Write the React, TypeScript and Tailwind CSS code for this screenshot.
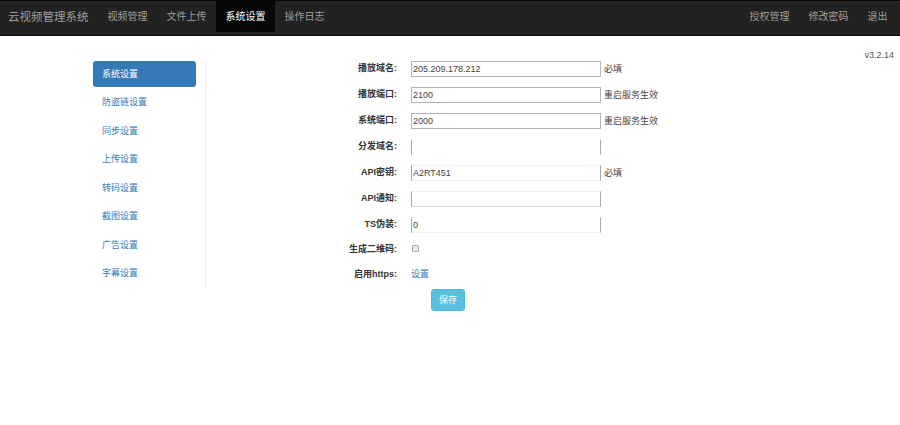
import React from "react";

const font = { fontFamily: '"Liberation Sans", "Noto Sans CJK SC", sans-serif' };

const sideItems = ["系统设置", "防盗链设置", "同步设置", "上传设置", "转码设置", "截图设置", "广告设置", "字幕设置"];

type Row = { label: string; value?: string; hint?: string; border: string };
const rows: Row[] = [
  { label: "播放域名:", value: "205.209.178.212", hint: "必填", border: "border-[#b5b5b5]" },
  { label: "播放端口:", value: "2100", hint: "重启服务生效", border: "border-[#b5b5b5]" },
  { label: "系统端口:", value: "2000", hint: "重启服务生效", border: "border-[#b5b5b5]" },
  { label: "分发域名:", border: "border-x-[#a8a8a8] border-y-white" },
  { label: "API密钥:", value: "A2RT451", hint: "必填", border: "border-x-[#a8a8a8] border-y-[#eeeeee]" },
  { label: "API通知:", border: "border-x-[#a8a8a8] border-t-[#eeeeee] border-b-[#d8d8d8]" },
  { label: "TS伪装:", value: "0", border: "border-x-[#a8a8a8] border-t-white border-b-[#f4f4f4]" },
];

export default function App() {
  return (
    <div style={font} className="min-h-[425px] bg-white text-[9px] text-[#333]">
      <nav className="flex h-[36px] items-stretch justify-between border-y border-[#080808] bg-[#222] text-[10px] text-[#9d9d9d]">
        <div className="flex">
          <span className="flex w-[98px] items-center pl-[8px] text-[11.5px]">云视频管理系统</span>
          {["视频管理", "文件上传", "系统设置", "操作日志"].map((t) => (
            <span
              key={t}
              className={
                t === "系统设置"
                  ? "flex h-[31px] w-[59px] items-center justify-center bg-[#080808] text-white"
                  : "flex h-[31px] w-[59px] items-center justify-center"
              }
            >
              {t}
            </span>
          ))}
        </div>
        <div className="flex pr-[3px]">
          {["授权管理", "修改密码", "退出"].map((t) => (
            <span key={t} className="flex h-[31px] items-center px-[9.5px]">
              {t}
            </span>
          ))}
        </div>
      </nav>

      <div className="relative flex pl-[93px] pt-[25px]">
        <span className="absolute right-[6px] top-[13px] text-[#555]">v3.2.14</span>

        <ul className="h-[227px] w-[113px] border-r border-[#eeeeee] pr-[9px]">
          {sideItems.map((t, i) => (
            <li
              key={t}
              className={
                i === 0
                  ? "flex h-[26px] items-center rounded-[3px] bg-[#337ab7] pl-[9px] pt-[2px] text-white"
                  : "mt-[2.5px] flex h-[26px] items-center pl-[9px] pt-[1px] text-[#337ab7]"
              }
            >
              {t}
            </li>
          ))}
        </ul>

        <div className="flex flex-col pl-[112px]">
          {rows.map((r) => (
            <div key={r.label} className="mb-[10px] flex h-[16px] items-center">
              <label className="w-[93px] pr-[14px] text-right font-bold">{r.label}</label>
              <div
                className={`flex h-[16px] w-[190px] items-center border pl-[1px] pt-[1px] text-[#444] ${r.border}`}
              >
                {r.value}
              </div>
              {r.hint && <span className="ml-[3px] pt-[1px] text-[#444]">{r.hint}</span>}
            </div>
          ))}
          <div className="mb-[12px] flex h-[14px] items-center">
            <label className="w-[93px] pr-[14px] text-right font-bold">生成二维码:</label>
            <span className="-mt-[3px] ml-[1px] h-[7px] w-[7px] rounded-[1px] border border-[#aaa] bg-[#e8e8e8]" />
          </div>
          <div className="mb-[8px] flex h-[12px] items-center">
            <label className="w-[93px] pr-[14px] text-right font-bold">启用https:</label>
            <span className="text-[#337ab7]">设置</span>
          </div>
          <div className="pl-[113px]">
            <button className="h-[22px] w-[34px] rounded-[3px] border border-[#46b8da] bg-[#5bc0de] pt-[1px] text-white">
              保存
            </button>
          </div>
        </div>
      </div>
    </div>
  );
}
